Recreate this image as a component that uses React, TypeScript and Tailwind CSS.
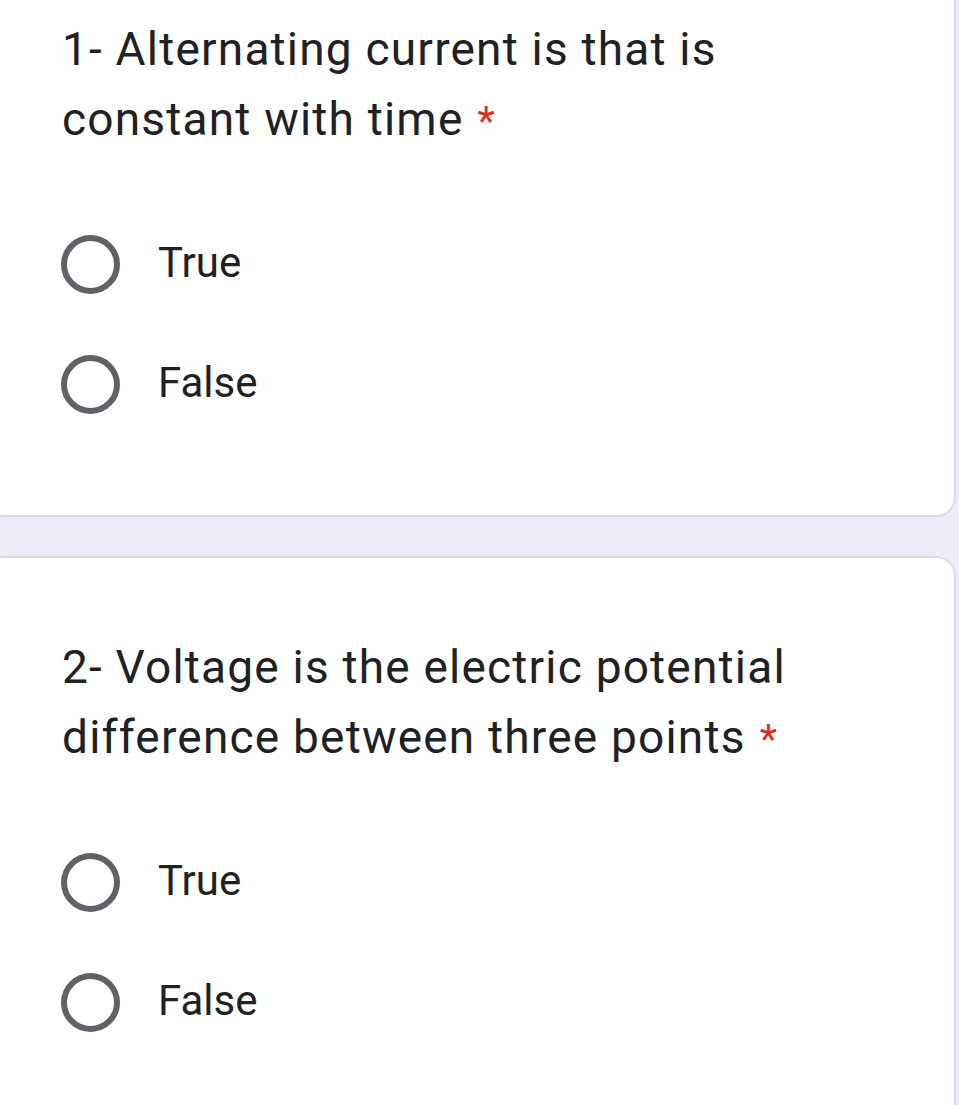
import React from "react";

type Question = {
  id: number;
  title: string;
  options: string[];
};

const QUESTIONS: Question[] = [
  {
    id: 1,
    title: "1- Alternating current is that is constant with time",
    options: ["True", "False"],
  },
  {
    id: 2,
    title: "2- Voltage is the electric potential difference between three points",
    options: ["True", "False"],
  },
];

function Radio() {
  return <span className="block w-[59px] h-[59px] shrink-0 rounded-full border-[6px] border-[#5f6368]" />;
}

function QuestionCard({ q, first }: { q: Question; first?: boolean }) {
  return (
    <div
      className={`bg-white rounded-[20px] border-2 border-[#dadce0] -ml-[16px] mr-[3px] pl-[76px] pr-[120px] ${
        first ? "-mt-[24px] pt-[36px] pb-[71px]" : "pt-[74px] pb-[60px]"
      }`}
    >
      <div className="text-[46px] leading-[70px] text-[#202124] font-['Roboto',sans-serif] tracking-[1.2px]">
        {q.title}
        <span className="inline-block align-top leading-none mt-[18px] ml-[14px] text-[#d93025] text-[40px] tracking-normal">
          *
        </span>
      </div>
      <div className="mt-[50px] flex flex-col">
        {q.options.map((opt) => (
          <label key={opt} className="flex items-center gap-[38px] h-[120px] -ml-[1px]">
            <Radio />
            <span className="text-[42px] text-[#202124] font-['Roboto',sans-serif] -mt-[3px]">{opt}</span>
          </label>
        ))}
      </div>
    </div>
  );
}

export default function App() {
  return (
    <div className="min-h-[1105px] h-[1105px] overflow-hidden bg-[#f0ebf8]">
      <QuestionCard q={QUESTIONS[0]} first />
      <div className="h-[39px]" />
      <QuestionCard q={QUESTIONS[1]} />
    </div>
  );
}
